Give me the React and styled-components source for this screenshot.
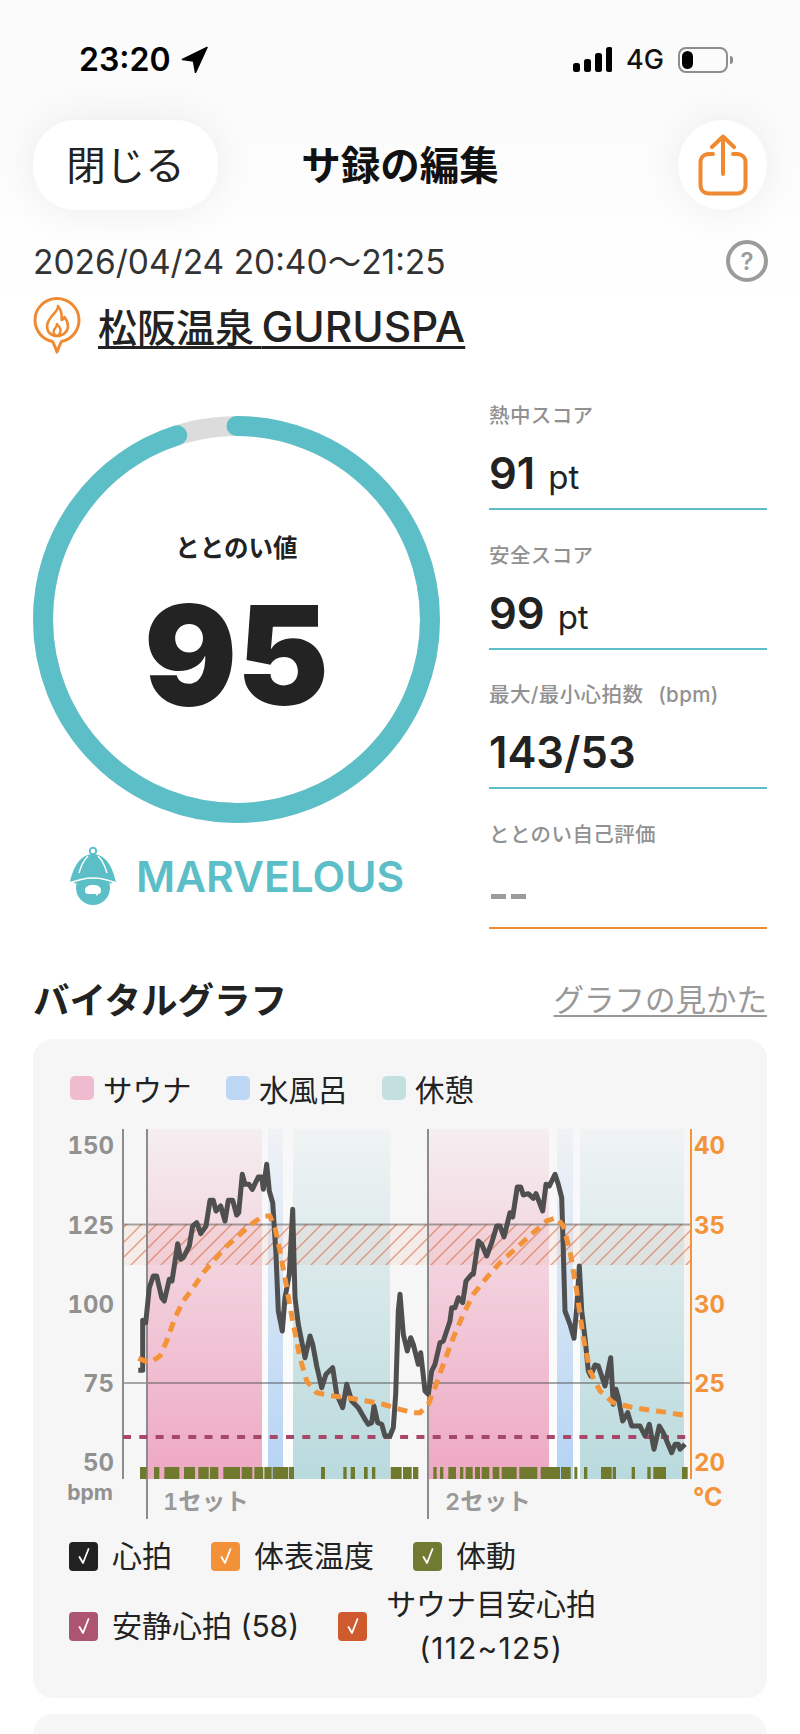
import React from "react";
import styled, { createGlobalStyle } from "styled-components";

const Global = createGlobalStyle`
  html, body { margin: 0; padding: 0; background: #fff; }
  body { font-family: Inter, "Noto Sans CJK JP", "Noto Sans", sans-serif; color: #222; }
`;

const Page = styled.div`
  width: 800px;
  height: 1734px;
  overflow: hidden;
  background: linear-gradient(#fbfbfb 0, #fbfbfb 100px, #fff 300px);
`;

/* status bar */
const StatusBar = styled.div`
  box-sizing: border-box;
  height: 120px;
  padding: 44px 68px 0 79px;
  display: flex;
  justify-content: space-between;
  align-items: flex-start;
`;
const StatusGroup = styled.div`
  display: flex;
  align-items: center;
  height: 31px;
  gap: ${(p) => p.$gap}px;
`;
const Time = styled.span`
  font-size: 32px;
  font-weight: 600;
  color: #000;
  line-height: 31px;
`;
const Network = styled.span`
  font-size: 27px;
  font-weight: 500;
  color: #111;
  line-height: 31px;
`;
const Battery = styled.div`
  position: relative;
  box-sizing: border-box;
  width: 50px;
  height: 26px;
  border: 2px solid #8d8d8d;
  border-radius: 8px;
  padding: 2px;
  margin-right: 4px;
  &::after {
    content: "";
    position: absolute;
    right: -7px;
    top: 7px;
    width: 3px;
    height: 8px;
    border-radius: 0 3px 3px 0;
    background: #8d8d8d;
  }
`;
const BatteryLevel = styled.div`
  width: 11px;
  height: 100%;
  border-radius: 6px;
  background: #000;
`;

/* header */
const Header = styled.header`
  box-sizing: border-box;
  height: 90px;
  padding: 0 33px;
  display: grid;
  grid-template-columns: 1fr auto 1fr;
  align-items: center;
`;
const CloseButton = styled.button`
  justify-self: start;
  width: 185px;
  height: 90px;
  border: 0;
  padding: 0 0 6px;
  border-radius: 42px;
  background: #fff;
  box-shadow: 0 0 44px rgba(0, 0, 0, 0.07);
  font: 400 39.5px Inter, "Noto Sans CJK JP", sans-serif;
  color: #222;
`;
const Title = styled.h1`
  margin: 0;
  padding-bottom: 6px;
  font-size: 39.5px;
  font-weight: 700;
  color: #111;
`;
const ShareButton = styled.button`
  justify-self: end;
  width: 89px;
  height: 90px;
  border: 0;
  padding: 0;
  border-radius: 50%;
  background: #fff;
  box-shadow: 0 0 44px rgba(0, 0, 0, 0.07);
  display: flex;
  align-items: center;
  justify-content: center;
`;

/* visit */
const DateRow = styled.div`
  margin-top: 30px;
  padding: 0 32px 0 33px;
  height: 42px;
  display: flex;
  justify-content: space-between;
  align-items: center;
`;
const DateText = styled.span`
  padding-bottom: 4px;
  font-size: 33.5px;
  color: #333;
`;
const Help = styled.span`
  box-sizing: border-box;
  width: 42px;
  height: 42px;
  border: 4px solid #9b9b9b;
  border-radius: 50%;
  display: flex;
  align-items: center;
  justify-content: center;
  font-size: 24px;
  font-weight: 600;
  color: #9b9b9b;
`;
const VenueRow = styled.div`
  margin-top: 14px;
  padding: 0 33px;
  height: 58px;
  display: flex;
  align-items: center;
  gap: 17px;
`;
const VenueName = styled.a`
  padding-top: 4px;
  font-size: 39px;
  font-weight: 500;
  color: #222;
  text-decoration: underline;
  text-decoration-thickness: 3px;
  text-underline-offset: 4px;
  line-height: 50px;
  word-spacing: -3px;
`;
const VenueLatin = styled.span`
  font-size: 42.5px;
`;

/* score */
const ScoreGrid = styled.section`
  padding: 46px 33px 0;
  display: flex;
  gap: 49px;
`;
const GaugeColumn = styled.div`
  width: 407px;
  padding-top: 16px;
`;
const Gauge = styled.div`
  display: grid;
  width: 407px;
  height: 407px;
  & > * {
    grid-area: 1 / 1;
  }
`;
const GaugeCenter = styled.div`
  display: flex;
  flex-direction: column;
  align-items: center;
  padding-top: 117px;
`;
const GaugeLabel = styled.span`
  font-size: 24.5px;
  font-weight: 600;
  line-height: 30px;
  color: #222;
`;
const GaugeValue = styled.span`
  margin-top: 17px;
  font-size: 138px;
  font-weight: 900;
  line-height: 150px;
  color: #232323;
`;
const Rank = styled.div`
  margin-top: 23px;
  height: 60px;
  padding-left: 35px;
  display: flex;
  align-items: center;
  gap: 18px;
`;
const RankName = styled.span`
  font-size: 42.5px;
  font-weight: 600;
  color: #5cbfc7;
`;
const Stats = styled.div`
  width: 278px;
  display: flex;
  flex-direction: column;
  gap: 29.5px;
`;
const Stat = styled.div`
  box-sizing: border-box;
  height: 110px;
  padding-top: 2px;
  border-bottom: 2px solid ${(p) => p.$line};
`;
const StatLabel = styled.div`
  font-size: 20.5px;
  font-weight: 500;
  line-height: 28px;
  letter-spacing: 0.4px;
  word-spacing: 9px;
  color: #919191;
`;
const StatValue = styled.div`
  margin-top: 17px;
  height: 52px;
  display: flex;
  align-items: baseline;
  gap: 13px;
  font-size: 43.5px;
  font-weight: 600;
  line-height: 52px;
  color: #222;
`;
const StatUnit = styled.span`
  font-size: 33px;
  font-weight: 400;
`;
const Empty = styled.div`
  margin-top: 45px;
  display: flex;
  gap: 5px;
  padding-left: 2px;
`;
const EmptyDash = styled.i`
  width: 15px;
  height: 5px;
  background: #9c9c9c;
`;

/* vitals */
const SectionHead = styled.div`
  margin-top: 46.5px;
  padding: 0 33px;
  height: 46px;
  display: flex;
  justify-content: space-between;
  align-items: center;
`;
const SectionTitle = styled.h2`
  margin: 0;
  font-size: 36.5px;
  font-weight: 700;
  color: #222;
`;
const GuideLink = styled.a`
  font-size: 30.5px;
  color: #999;
  text-decoration: underline;
  text-decoration-thickness: 2px;
  text-underline-offset: 4px;
`;
const Card = styled.section`
  box-sizing: border-box;
  margin: 18px 33px 0;
  width: 734px;
  border-radius: 20px;
  background: #f6f6f6;
  padding: 37px 0 28px;
`;
const NextCard = styled(Card)`
  margin-top: 16px;
  height: 120px;
`;
const Swatches = styled.div`
  height: 24px;
  padding-left: 37px;
  display: flex;
  align-items: center;
`;
const SwatchItem = styled.div`
  display: flex;
  align-items: center;
  gap: 9px;
  margin-right: 34.5px;
  font-size: 29.5px;
  color: #222;
`;
const Swatch = styled.i`
  width: 24px;
  height: 24px;
  border-radius: 5px;
  background: ${(p) => p.$color};
`;
const Chart = styled.svg`
  display: block;
  margin-top: 21px;
`;
const AxisText = styled.text`
  font-family: Inter, sans-serif;
  font-size: ${(p) => p.$size || 24}px;
  font-weight: 700;
  font-variant-numeric: tabular-nums;
  fill: ${(p) => p.$color};
`;
const SetText = styled.text`
  font-family: Inter, "Noto Sans CJK JP", sans-serif;
  font-size: 23.5px;
  font-weight: 600;
  font-variant-numeric: tabular-nums;
  fill: #999;
`;
const Checks = styled.div`
  margin-top: 8px;
  padding-left: 36px;
  display: flex;
  flex-direction: column;
  gap: 4px;
`;
const CheckRow = styled.div`
  display: flex;
  align-items: center;
  gap: 39px;
`;
const CheckItem = styled.label`
  display: flex;
  align-items: center;
  gap: ${(p) => p.$gap || 14}px;
  font-size: 30px;
  color: #222;
`;
const CheckBox = styled.span`
  flex: none;
  width: 29px;
  height: 29px;
  border-radius: 4px;
  background: ${(p) => p.$color};
  display: flex;
  align-items: center;
  justify-content: center;
`;
const CheckText = styled.span`
  text-align: center;
  line-height: 44px;
`;
const CheckRange = styled.span`
  display: block;
  letter-spacing: 1.2px;
`;

/* charts data: traced in two local frames */
const A = (l) => l.map(([x, y]) => `${(50 + x / 3).toFixed(1)},${(1110 + y / 3).toFixed(1)}`);
const B = (l) => l.map(([x, y]) => `${(400 + x / 3).toFixed(1)},${(1110 + y / 3).toFixed(1)}`);

const heart = [
  ...A([[265,778],[278,778],[278,628],[287,635],[298,530],[310,495],[320,495],[335,560],[343,570],[358,505],[366,510],[383,398],[392,445],[400,440],[418,405],[428,345],[440,335],[452,368],[468,345],[480,268],[490,268],[498,300],[512,285],[525,330],[535,268],[548,268],[560,312],[566,305],[577,190],[585,220],[597,220],[607,235],[625,198],[635,198],[640,235],[650,160],[658,240],[668,275],[678,430],[685,600],[697,660],[705,560],[718,490],[728,295],[735,560],[745,640],[765,740],[780,675],[788,700],[800,765],[815,830],[828,790],[848,770],[860,850],[878,890],[890,820],[905,870],[925,890],[945,925],[955,940],[965,935],[972,885],[983,935],[995,940],[1005,975],[1020,975],[1030,950],[1037,850],[1045,600],[1050,550],[1060,670],[1072,720],[1082,680],[1090,700],[1105,760],[1112,725],[1125,840],[1135,850]]),
  ...B([[95,780],[105,760],[120,695],[130,690],[150,630],[155,590],[165,590],[175,560],[188,575],[198,510],[215,490],[220,490],[235,390],[245,400],[260,435],[275,395],[290,345],[300,345],[312,378],[330,305],[338,318],[352,228],[362,228],[370,252],[385,248],[400,262],[408,248],[428,300],[438,220],[448,225],[465,190],[475,220],[485,260],[490,420],[495,600],[510,640],[522,682],[530,590],[538,465],[545,600],[555,680],[565,780],[572,795],[585,762],[595,765],[615,825],[632,740],[640,880],[648,835],[655,860],[668,930],[683,905],[695,945],[720,945],[735,975],[748,940],[762,1015],[778,945],[790,965],[815,1025],[825,1000],[835,1000],[840,1015],[855,1000]]),
].join(" ");

const temp = [
  ...A([[265,742],[300,755],[330,735],[350,690],[375,620],[400,570],[430,530],[460,485],[490,450],[530,405],[570,370],[610,335],[640,315],[660,315],[675,350],[690,420],[710,530],[730,640],[750,740],[770,810],[800,845],[850,855],[900,862],[950,870],[1000,880],[1050,895],[1090,905],[1110,905],[1135,880]]),
  ...B([[105,830],[130,760],[160,680],[190,610],[220,550],[260,500],[300,455],[350,410],[400,365],[440,330],[470,320],[490,345],[510,420],[530,540],[550,680],[570,780],[600,840],[640,875],[700,890],[770,900],[850,912]]),
].join(" ");

const movement = [
  ...[[270,290],[312,328],[343,388],[402,435],[445,476],[480,505],[520,570],[575,607],[613,640],[643,665],[668,715],[717,732],[813,825],[880,890],[902,915],[942,953],[966,976],[1022,1055],[1059,1085],[1089,1105]].map(([a, b]) => [50 + a / 3, (b - a) / 3]),
  ...[[100,110],[120,130],[145,168],[180,190],[197,218],[225,240],[245,268],[278,298],[305,350],[358,412],[422,480],[483,512],[523,532],[552,562],[603,635],[638,648],[695,705],[742,752],[760,798],[846,863]].map(([a, b]) => [400 + a / 3, (b - a) / 3]),
];

const bands = [
  { x: 147, w: 115, f: "url(#sauna)" },
  { x: 268, w: 15, f: "url(#water)" },
  { x: 293, w: 97, f: "url(#rest)" },
  { x: 428, w: 121, f: "url(#sauna)" },
  { x: 557, w: 16, f: "url(#water)" },
  { x: 580, w: 104, f: "url(#rest)" },
];
const halos = [[262, 6], [283, 10], [549, 8], [573, 7]];

const VitalChart = () => (
  <Chart width="734" height="405" viewBox="33 1120 734 405">
    <defs>
      <linearGradient id="sauna" x1="0" y1="0" x2="0" y2="1">
        <stop offset="0" stopColor="#eea8c2" stopOpacity="0.1" />
        <stop offset="1" stopColor="#eea8c2" />
      </linearGradient>
      <linearGradient id="water" x1="0" y1="0" x2="0" y2="1">
        <stop offset="0" stopColor="#b5d3f4" stopOpacity="0.1" />
        <stop offset="1" stopColor="#b5d3f4" />
      </linearGradient>
      <linearGradient id="rest" x1="0" y1="0" x2="0" y2="1">
        <stop offset="0" stopColor="#b9dadd" stopOpacity="0.1" />
        <stop offset="1" stopColor="#b9dadd" />
      </linearGradient>
      <linearGradient id="halo" x1="0" y1="0" x2="0" y2="1">
        <stop offset="0" stopColor="#fff" stopOpacity="0.15" />
        <stop offset="1" stopColor="#fff" stopOpacity="0.75" />
      </linearGradient>
      <pattern id="hatch" patternUnits="userSpaceOnUse" width="15" height="15">
        <path d="M-3 3L3-3M0 15L15 0M12 18L18 12" stroke="#d9663d" strokeWidth="1.4" strokeOpacity="0.6" />
      </pattern>
    </defs>
    {bands.map((b) => (
      <rect key={b.x} x={b.x} y="1128" width={b.w} height="350" fill={b.f} />
    ))}
    {halos.map(([x, w]) => (
      <rect key={x} x={x} y="1128" width={w} height="350" fill="url(#halo)" />
    ))}
    <rect x="123" y="1223" width="568" height="41" fill="#e8a58c" fillOpacity="0.12" />
    <rect x="123" y="1223" width="568" height="41" fill="url(#hatch)" />
    <path d="M123 1223.5H691M123 1382H691" stroke="#555" strokeOpacity="0.5" strokeWidth="2" />
    <path d="M123 1128V1478" stroke="#8c8c8c" strokeWidth="2" />
    <path d="M147 1128V1518M428 1128V1518" stroke="#8c8c8c" strokeWidth="2" />
    <path d="M691 1128V1478" stroke="#f4943a" strokeWidth="2" />
    {movement.map(([x, w]) => (
      <rect key={x} x={x} y="1466" width={w} height="12" fill="#6f7a2e" />
    ))}
    <path d="M123 1436H691" stroke="#a8476a" strokeWidth="4" strokeDasharray="8 8.3" />
    <polyline points={heart} fill="none" stroke="#4f4f4f" strokeWidth="5" strokeLinejoin="round" />
    <polyline points={temp} fill="none" stroke="#f4943a" strokeWidth="5" strokeDasharray="10 7" />
    {[["150", 1153], ["125", 1233], ["100", 1312], ["75", 1391], ["50", 1470]].map(([t, y]) => (
      <AxisText key={t} x="114" y={y} textAnchor="end" $color="#919191">{t}</AxisText>
    ))}
    <AxisText x="113" y="1499" textAnchor="end" $size="21" $color="#919191">bpm</AxisText>
    {[["40", 1153], ["35", 1233], ["30", 1312], ["25", 1391], ["20", 1470]].map(([t, y]) => (
      <AxisText key={t} x="694" y={y} $color="#f4943a">{t}</AxisText>
    ))}
    <AxisText x="693" y="1505" $size="25" $color="#f4943a">°C</AxisText>
    <SetText x="163" y="1509">1セット</SetText>
    <SetText x="445" y="1509">2セット</SetText>
  </Chart>
);

const Check = ({ color, gap, children }) => (
  <CheckItem $gap={gap}>
    <CheckBox $color={color}>
      <svg width="16" height="20" viewBox="0 0 16 20">
        <path d="M3.500 11L7 17L12.500 3" fill="none" stroke="#fff" strokeWidth="1.800" strokeLinecap="round" strokeLinejoin="round" />
      </svg>
    </CheckBox>
    <CheckText>{children}</CheckText>
  </CheckItem>
);

const Stat1 = ({ label, value, unit }) => (
  <Stat $line="#5cbfc7">
    <StatLabel>{label}</StatLabel>
    <StatValue>
      {value}
      {unit && <StatUnit>{unit}</StatUnit>}
    </StatValue>
  </Stat>
);

export default function App() {
  const c = 203.5;
  const r = 193.5;
  const circ = 2 * Math.PI * r;
  return (
    <Page>
      <Global />
      <StatusBar>
        <StatusGroup $gap={10}>
          <Time>23:20</Time>
          <svg width="27" height="27" viewBox="0 0 27 27">
            <path d="M26 1.500L1.500 13.500 12.500 15 14.500 26.500Z" fill="#000" stroke="#000" strokeWidth="1.500" strokeLinejoin="round" />
          </svg>
        </StatusGroup>
        <StatusGroup $gap={14}>
          <svg width="39" height="26" viewBox="0 0 39 26">
            <rect x="0" y="16" width="7" height="9" rx="2.500" fill="#000" />
            <rect x="11" y="12" width="7" height="13" rx="2.500" fill="#000" />
            <rect x="22" y="6" width="7" height="19" rx="2.500" fill="#000" />
            <rect x="33" y="0" width="6.500" height="25" rx="2.500" fill="#000" />
          </svg>
          <Network>4G</Network>
          <Battery><BatteryLevel /></Battery>
        </StatusGroup>
      </StatusBar>

      <Header>
        <CloseButton>閉じる</CloseButton>
        <Title>サ録の編集</Title>
        <ShareButton aria-label="share">
          <svg width="50" height="62" viewBox="0 0 50 62">
            <path d="M15 20H11C6 20 2.500 23.500 2.500 28.500V51C2.500 56 6 59.500 11 59.500H39C44 59.500 47.500 56 47.500 51V28.500C47.500 23.500 44 20 39 20H35" fill="none" stroke="#f08a32" strokeWidth="4" strokeLinecap="round" />
            <path d="M25 40V3M14 13L25 2.500 36 13" fill="none" stroke="#f08a32" strokeWidth="4" strokeLinecap="round" strokeLinejoin="round" />
          </svg>
        </ShareButton>
      </Header>

      <DateRow>
        <DateText>2026/04/24 20:40～21:25</DateText>
        <Help>?</Help>
      </DateRow>
      <VenueRow>
        <svg width="48" height="58" viewBox="0 0 48 58">
          <path d="M24 2.500C12 2.500 2 12 2 24c0 11 8 20 17.500 21.500C21 48 22.500 52 24 56c1.500-4 3-8 4.500-10.500C38 44 46 35 46 24 46 12 36 2.500 24 2.500Z" fill="none" stroke="#f08a32" strokeWidth="3" strokeLinejoin="round" />
          <path d="M25 10c1 6-10 10-11 20 0 6 4 10 10 10s11-4 11-10c0-4-2-7-3.500-9-1 2-2 3-3 3 .5-4 0-10-3.500-14Z" fill="none" stroke="#f08a32" strokeWidth="2.600" strokeLinejoin="round" />
          <path d="M24 40c-3-1-4-4-3-6 1-2 3-3 3-6 2 2 4.500 6 3 9-.5 1.500-1.500 2.500-3 3Z" fill="none" stroke="#f08a32" strokeWidth="2.400" strokeLinejoin="round" />
        </svg>
        <VenueName>松阪温泉 <VenueLatin>GURUSPA</VenueLatin></VenueName>
      </VenueRow>

      <ScoreGrid>
        <GaugeColumn>
          <Gauge>
            <svg width="407" height="407" viewBox="0 0 407 407">
              <circle cx={c} cy={c} r={r} fill="none" stroke="#dcdcdc" strokeWidth="20" />
              <circle
                cx={c}
                cy={c}
                r={r}
                fill="none"
                stroke="#5cbfc7"
                strokeWidth="20"
                strokeLinecap="round"
                strokeDasharray={`${circ * 0.95} ${circ}`}
                transform={`rotate(-90 ${c} ${c})`}
              />
            </svg>
            <GaugeCenter>
              <GaugeLabel>ととのい値</GaugeLabel>
              <GaugeValue>95</GaugeValue>
            </GaugeCenter>
          </Gauge>
          <Rank>
            <svg width="50" height="60" viewBox="0 0 50 60">
              <circle cx="25" cy="5" r="3.200" fill="none" stroke="#5cbfc7" strokeWidth="2" />
              <path d="M25 8C12 8 5 22 2 36 10 33 18 30 25 30 32 30 40 33 48 36 45 22 38 8 25 8Z" fill="#5cbfc7" />
              <circle cx="25" cy="42" r="17" fill="#5cbfc7" />
              <path d="M6 36C12 33 18 31 25 31 32 31 38 33 44 36" fill="none" stroke="#5cbfc7" strokeWidth="4" />
              <path d="M0 38C9 34 18 32 25 32 32 32 41 34 50 38" fill="none" stroke="#fff" strokeWidth="1.500" />
              <path d="M11 27C13 20 16 14 20 10M39 27C37 20 34 14 30 10" fill="none" stroke="#fff" strokeWidth="1.400" />
              <path d="M17 44c0-3 3-5 8-5s8 2 8 5c0 3-1 4-3 4l-1 2-1.500-2H21c-3 0-4-1-4-4Z" fill="#fff" />
            </svg>
            <RankName>MARVELOUS</RankName>
          </Rank>
        </GaugeColumn>
        <Stats>
          <Stat1 label="熱中スコア" value="91" unit="pt" />
          <Stat1 label="安全スコア" value="99" unit="pt" />
          <Stat1 label="最大/最小心拍数 (bpm)" value="143/53" />
          <Stat $line="#f08a32">
            <StatLabel>ととのい自己評価</StatLabel>
            <Empty><EmptyDash /><EmptyDash /></Empty>
          </Stat>
        </Stats>
      </ScoreGrid>

      <SectionHead>
        <SectionTitle>バイタルグラフ</SectionTitle>
        <GuideLink>グラフの見かた</GuideLink>
      </SectionHead>
      <Card>
        <Swatches>
          <SwatchItem><Swatch $color="#efbccf" />サウナ</SwatchItem>
          <SwatchItem><Swatch $color="#bcd6f4" />水風呂</SwatchItem>
          <SwatchItem><Swatch $color="#c4dfe0" />休憩</SwatchItem>
        </Swatches>
        <VitalChart />
        <Checks>
          <CheckRow>
            <Check color="#222">心拍</Check>
            <Check color="#f29138">体表温度</Check>
            <Check color="#707a30">体動</Check>
          </CheckRow>
          <CheckRow>
            <Check color="#ad5470">安静心拍 (58)</Check>
            <Check color="#cf5a2d" gap={19}>
              サウナ目安心拍
              <CheckRange>(112~125)</CheckRange>
            </Check>
          </CheckRow>
        </Checks>
      </Card>
      <NextCard />
    </Page>
  );
}
